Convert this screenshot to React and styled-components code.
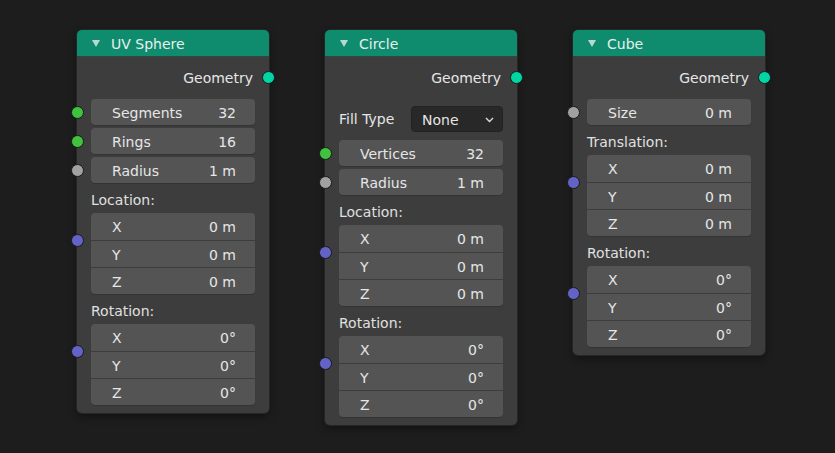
import React from 'react';
import styled, { createGlobalStyle } from 'styled-components';

const GlobalStyle = createGlobalStyle`
  html, body {
    margin: 0;
    padding: 0;
    background: #1d1d1d;
  }
  body {
    font-family: "DejaVu Sans", "Liberation Sans", sans-serif;
    font-size: 14px;
    color: #e6e6e6;
  }
`;

const SOCKET = {
  geometry: '#00d6a3',
  int: '#3fc23f',
  float: '#a1a1a1',
  vector: '#6363c7',
};

const Canvas = styled.div`
  width: 835px;
  height: 453px;
  box-sizing: border-box;
  padding: 30px 0 0 77px;
  display: flex;
  align-items: flex-start;
  gap: 56px;
  overflow: hidden;
`;

const Node = styled.div`
  width: 192px;
  background: #3d3d3d;
  border-radius: 5px;
  box-shadow: 0 0 0 1px #262626, 0 3px 8px rgba(0, 0, 0, 0.45);
`;

const Header = styled.div`
  height: 27px;
  background: #0f8c6e;
  border-radius: 5px 5px 0 0;
  display: flex;
  align-items: center;
  padding: 1px 0 0 15px;
  gap: 11px;
  color: #e8efec;
  border-bottom: 1px solid #2d4a42;
  box-sizing: border-box;
`;

const Body = styled.div`
  padding: 8px 0 8px;
`;

const Row = styled.div`
  position: relative;
  padding: 0 14px;
  margin-top: ${(p) => p.$mt || 0}px;
`;

const Socket = styled.span`
  position: absolute;
  width: 11px;
  height: 11px;
  border-radius: 50%;
  background: ${(p) => p.$color};
  border: 1px solid #1a1a1a;
  ${(p) => (p.$right ? 'right: -6px;' : 'left: -6px;')}
  top: ${(p) => (p.$top != null ? `${p.$top - 6}px` : 'calc(50% - 6px)')};
`;

const OutputLabel = styled.div`
  height: 24px;
  padding-top: 1px;
  box-sizing: border-box;
  display: flex;
  align-items: center;
  justify-content: flex-end;
  padding-right: 2px;
`;

const Field = styled.div`
  height: 26px;
  background: #545454;
  border-radius: 4px;
  display: flex;
  align-items: center;
  justify-content: space-between;
  padding: 1px 19px 0 21px;
  box-sizing: border-box;
  box-shadow: 0 1px 0 #333;
`;

const GroupLabel = styled.div`
  height: 20px;
  display: flex;
  align-items: center;
  padding-top: 1px;
  box-sizing: border-box;
  margin: 6px 0 4px;
  color: #e0e0e0;
`;

const Group = styled.div`
  border-radius: 4px;
  overflow: hidden;
  background: #545454;
  box-shadow: 0 1px 0 #333;
`;

const GroupRow = styled.div`
  height: 27px;
  box-sizing: border-box;
  display: flex;
  align-items: center;
  justify-content: space-between;
  padding: 1px 19px 0 21px;
  & + & {
    border-top: 1px solid #3d3d3d;
  }
`;

const EnumRow = styled.div`
  display: flex;
  align-items: center;
  justify-content: space-between;
`;

const Dropdown = styled.div`
  width: 92px;
  height: 26px;
  box-sizing: border-box;
  background: #282828;
  border: 1px solid #222;
  border-radius: 4px;
  display: flex;
  align-items: center;
  justify-content: space-between;
  padding: 1px 8px 0 10px;
`;

const Triangle = () => (
  <svg width="8" height="7" viewBox="0 0 8 7">
    <path d="M0 0 L8 0 L4 7 Z" fill="#b9d9d0" />
  </svg>
);

const Chevron = () => (
  <svg width="9" height="6" viewBox="0 0 9 6">
    <path d="M1 1 L4.5 4.5 L8 1" fill="none" stroke="#dcdcdc" strokeWidth="1.4" />
  </svg>
);

function NumField({ label, value, socket, mt }) {
  return (
    <Row $mt={mt}>
      <Socket $color={SOCKET[socket]} />
      <Field>
        <span>{label}</span>
        <span>{value}</span>
      </Field>
    </Row>
  );
}

function VectorField({ label, unit }) {
  return (
    <Row>
      <GroupLabel>{label}</GroupLabel>
      <Socket $color={SOCKET.vector} $top={51} />
      <Group>
        {['X', 'Y', 'Z'].map((axis) => (
          <GroupRow key={axis}>
            <span>{axis}</span>
            <span>0{unit}</span>
          </GroupRow>
        ))}
      </Group>
    </Row>
  );
}

function NodeBox({ title, children }) {
  return (
    <Node>
      <Header>
        <Triangle />
        <span>{title}</span>
      </Header>
      <Body>
        <Row>
          <OutputLabel>Geometry</OutputLabel>
          <Socket $color={SOCKET.geometry} $right />
        </Row>
        {children}
      </Body>
    </Node>
  );
}

export default function App() {
  return (
    <>
      <GlobalStyle />
      <Canvas>
        <NodeBox title="UV Sphere">
          <NumField label="Segments" value="32" socket="int" mt={10} />
          <NumField label="Rings" value="16" socket="int" mt={3} />
          <NumField label="Radius" value="1 m" socket="float" mt={3} />
          <VectorField label="Location:" unit=" m" />
          <VectorField label="Rotation:" unit="°" />
        </NodeBox>

        <NodeBox title="Circle">
          <Row $mt={17}>
            <EnumRow>
              <span>Fill Type</span>
              <Dropdown>
                <span>None</span>
                <Chevron />
              </Dropdown>
            </EnumRow>
          </Row>
          <NumField label="Vertices" value="32" socket="int" mt={8} />
          <NumField label="Radius" value="1 m" socket="float" mt={3} />
          <VectorField label="Location:" unit=" m" />
          <VectorField label="Rotation:" unit="°" />
        </NodeBox>

        <NodeBox title="Cube">
          <NumField label="Size" value="0 m" socket="float" mt={10} />
          <VectorField label="Translation:" unit=" m" />
          <VectorField label="Rotation:" unit="°" />
        </NodeBox>
      </Canvas>
    </>
  );
}
